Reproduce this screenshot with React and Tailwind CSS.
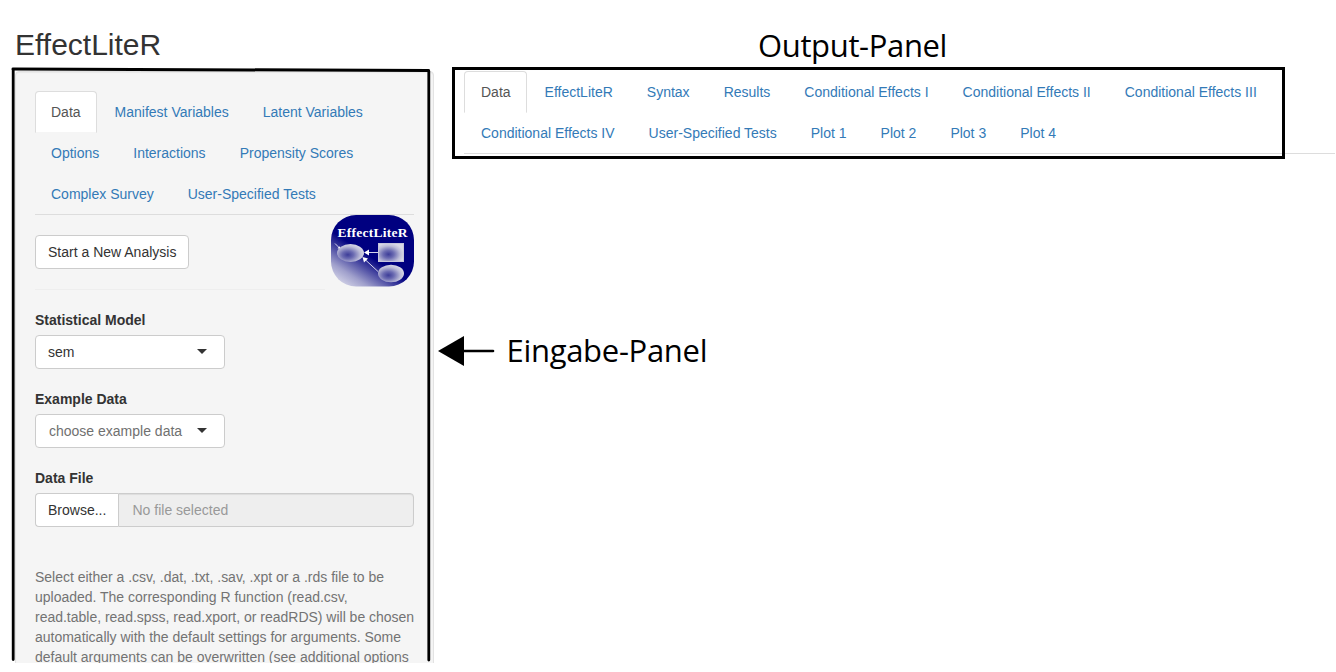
import React from 'react';

function Tab({ children, active }) {
  return (
    <li className="-mb-px mr-0.5">
      <a
        className={
          active
            ? 'block rounded-t border border-[#ddd] border-b-transparent bg-white bg-clip-padding px-[15px] py-2.5 leading-5 text-[#555]'
            : 'block rounded-t border border-transparent px-[15px] py-2.5 leading-5 text-[#337ab7]'
        }
      >
        {children}
      </a>
    </li>
  );
}

function Tabs({ rows, className = '' }) {
  return (
    <nav className={`border-b border-[#ddd] ${className}`}>
      {rows.map((row, r) => (
        <ul key={r} className="flex whitespace-nowrap">
          {row.map((name) => (
            <Tab key={name} active={name === 'Data'}>{name}</Tab>
          ))}
        </ul>
      ))}
    </nav>
  );
}

function Select({ label, value, muted }) {
  return (
    <div className="mb-5">
      <div className="mb-[5px] font-bold">{label}</div>
      <div className="flex h-[34px] w-[190px] items-center justify-between rounded border border-[#ccc] bg-white pl-3 pr-[17px]">
        <span className={muted ? 'pl-px text-[#707070]' : ''}>{value}</span>
        <svg width="10" height="5" viewBox="0 0 10 5" className="-mt-0.5">
          <path d="M0 0h10L5 5z" fill="#333" />
        </svg>
      </div>
    </div>
  );
}

function Logo() {
  return (
    <svg width="83" height="72" viewBox="0 0 83 72" className="shrink-0">
      <defs>
        <linearGradient id="corner" gradientUnits="userSpaceOnUse" x1="12" y1="72" x2="34" y2="38">
          <stop offset="0" stopColor="#d8d8ea" />
          <stop offset="0.35" stopColor="#a0a0cc" />
          <stop offset="0.7" stopColor="#4a4aa2" />
          <stop offset="1" stopColor="#000080" />
        </linearGradient>
        <radialGradient id="node" cx="0.4" cy="0.6" r="0.62">
          <stop offset="0" stopColor="#3c3c98" />
          <stop offset="0.35" stopColor="#6c6cb2" />
          <stop offset="0.75" stopColor="#bcbcd8" />
          <stop offset="1" stopColor="#d8d8e6" />
        </radialGradient>
      </defs>
      <rect width="83" height="71.5" rx="25" ry="25" fill="url(#corner)" />
      <text x="6.5" y="22" fontSize="13.5" fontWeight="bold" textLength="70" fill="#fff" fontFamily="'Liberation Serif', serif">
        EffectLiteR
      </text>
      <g stroke="#d4d4ea" strokeWidth="1">
        <path d="M4 28.5l4 4M47 37.5H36M47 56.500L34 44.500" />
      </g>
      <path d="M33 37.500l5-3v6zM31.500 42l5.500 1.500-4 4zM9.500 34l-3-.8 2-2z" fill="#fff" />
      <ellipse cx="19.500" cy="38" rx="13.500" ry="9" fill="url(#node)" />
      <rect x="47.500" y="28.500" width="25" height="18" fill="url(#node)" stroke="#c6c6dc" />
      <ellipse cx="60" cy="58.500" rx="13" ry="8.700" fill="url(#node)" />
    </svg>
  );
}

const inputTabs = [
  ['Data', 'Manifest Variables', 'Latent Variables'],
  ['Options', 'Interactions', 'Propensity Scores'],
  ['Complex Survey', 'User-Specified Tests'],
];

const outputTabs = [
  ['Data', 'EffectLiteR', 'Syntax', 'Results', 'Conditional Effects I', 'Conditional Effects II', 'Conditional Effects III'],
  ['Conditional Effects IV', 'User-Specified Tests', 'Plot 1', 'Plot 2', 'Plot 3', 'Plot 4'],
];

const help = [
  'Select either a .csv, .dat, .txt, .sav, .xpt or a .rds file to be',
  'uploaded. The corresponding R function (read.csv,',
  'read.table, read.spss, read.xport, or readRDS) will be chosen',
  'automatically with the default settings for arguments. Some',
  'default arguments can be overwritten (see additional options',
];

export default function App() {
  return (
    <div className="relative h-[672px] w-[1336px] overflow-hidden bg-white font-['Liberation_Sans',Arial,sans-serif] text-sm leading-5 text-[#333]">
      <div className="flex h-[663px] flex-col overflow-hidden pl-[15px] pr-px pt-7">
        <h2 className="mb-2.5 text-[30px] leading-[33px]">EffectLiteR</h2>
        <div className="flex items-start gap-[30px]">
          <aside className="h-[700px] w-[419px] shrink-0 rounded border border-[#e3e3e3] bg-[#f5f5f5] p-[19px] shadow-[inset_0_1px_1px_rgba(0,0,0,0.05)]">
            <Tabs rows={inputTabs} />
            <div className="flex h-[95px] items-start justify-between">
              <div className="w-[290px] pt-5">
                <button className="block h-[34px] rounded border border-[#ccc] bg-white px-3 text-[#333]">
                  Start a New Analysis
                </button>
                <hr className="mt-5 border-[#eee]" />
              </div>
              <Logo />
            </div>
            <Select label="Statistical Model" value="sem" />
            <Select label="Example Data" value="choose example data" muted />
            <div className="mb-[5px] font-bold">Data File</div>
            <div className="flex h-[34px]">
              <div className="flex w-[83px] items-center rounded-l border border-r-0 border-[#ccc] bg-white pl-3">Browse...</div>
              <div className="flex flex-1 items-center rounded-r border border-[#ccc] bg-[#eee] pl-[13.500px] text-[#999] shadow-[inset_0_1px_1px_rgba(0,0,0,0.075)]">
                No file selected
              </div>
            </div>
            <div className="mt-10 whitespace-nowrap tracking-[-0.01px] text-[#737373]">
              {help.map((line) => (
                <p key={line}>{line}</p>
              ))}
            </div>
          </aside>
          <main className="min-w-0 flex-1">
            <Tabs rows={outputTabs} className="[&_li:first-child>a]:pl-4" />
          </main>
        </div>
      </div>

      {/* Hand-drawn annotations over the page */}
      <svg className="absolute left-0 top-0" width="500" height="672" viewBox="0 0 500 672">
        <g stroke="#000" fill="none" strokeLinecap="round">
          <path d="M13 69L428.500 70.500" strokeWidth="3" />
          <path d="M13.200 69.500V659.500M428.800 71V660" strokeWidth="2.800" />
          <path d="M463 351H493" strokeWidth="2.600" />
        </g>
        <path d="M438 351L464 336V366z" fill="#000" />
      </svg>
      <div className="absolute left-[452px] top-[67px] h-[92px] w-[833px] border-3 border-black" />
      <div className="absolute left-[758px] top-[25px] whitespace-nowrap font-['Open_Sans','Noto_Sans',sans-serif] text-[31px] leading-10 tracking-[-0.35px] text-black">
        Output-Panel
      </div>
      <div className="absolute left-[506.500px] top-[330px] whitespace-nowrap font-['Open_Sans','Noto_Sans',sans-serif] text-[31px] leading-10 tracking-[-0.3px] text-black">
        Eingabe-Panel
      </div>
    </div>
  );
}
